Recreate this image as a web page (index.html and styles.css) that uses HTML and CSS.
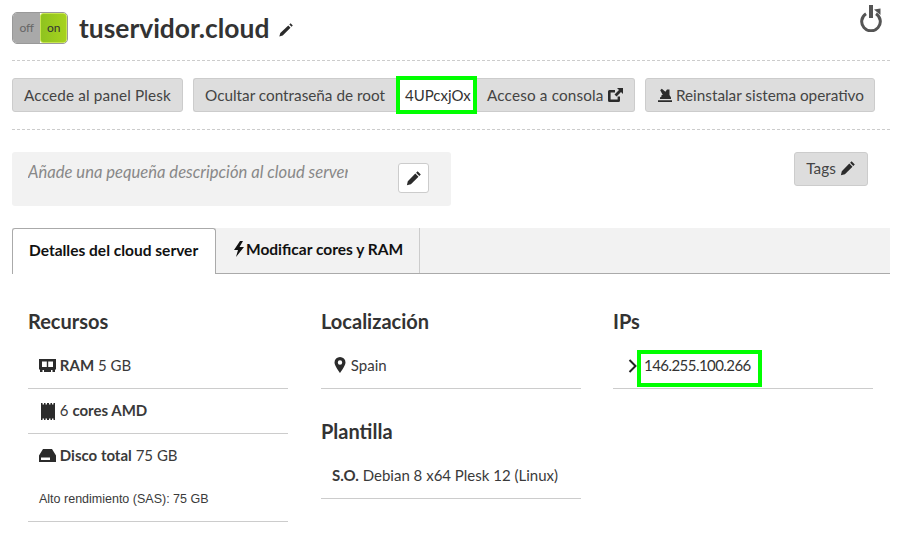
FILE: index.html
```html
<!DOCTYPE html>
<html lang="en">
<head>
    <meta charset="utf-8">
    <title>tuservidor.cloud</title>
    <link rel="stylesheet" href="styles.css">
</head>
<body>
    <div class="page">
        <header class="top">
            <div class="switch">
                <span class="switch-off">off</span>
                <span class="switch-on">on</span>
            </div>
            <h1>tuservidor.cloud</h1>
            <svg class="icon title-pencil" viewBox="0 0 16 16"><path d="M12.600 1.200l2.200 2.200-1.300 1.300-2.200-2.200zM10.300 3.500l2.200 2.200-7.800 7.800-3.400 1 1-3.400z"/></svg>
            <svg class="power" viewBox="0 0 24 27"><path d="M7 8.700a9.300 9.300 0 1 0 10 0" fill="none" stroke="#555" stroke-width="3"/><path d="M10 0h4v13h-4z" fill="#555"/><path d="M15 4.500l6.500-1v6.500z" fill="#555"/></svg>
        </header>

        <div class="actions">
            <button class="btn btn-spaced btn-panel">Accede al panel Plesk</button>
            <div class="btn-group">
                <button class="btn btn-left">Ocultar contraseña de root</button>
                <span class="mark mark-pass">4UPcxjOx</span>
                <button class="btn btn-right btn-spaced">Acceso a consola
                    <svg class="icon icon-external" viewBox="0 0 16 16"><path d="M2.500 3H8v2.400H3.600v7h7V9.600H13v3.900a1.500 1.500 0 0 1-1.500 1.500h-9A1.500 1.500 0 0 1 1 13.500v-9A1.500 1.500 0 0 1 2.500 3zM10 1h6v6l-2-2-4.500 4.500-2-2L12 3z"/></svg>
                </button>
            </div>
            <button class="btn btn-reinstall">
                <svg class="icon icon-reinstall" viewBox="0 0 16 16"><path d="M1 15v-1.800h14V15zM3 12v-1.500l1.500-1V8h1.300L3.200 3.300l1.600-1.500 3.600 2.900L10 2.500h2.500v5.500l1.500 2.500v1.500z"/></svg>
                Reinstalar sistema operativo</button>
        </div>

        <div class="desc-row">
            <div class="desc">
                <span class="desc-text">Añade una pequeña descripción al cloud server</span>
                <button class="edit-btn">
                    <svg class="icon" viewBox="0 0 16 16"><path d="M11.600 1.200l3.200 3.200-1.500 1.500-3.200-3.200zM9.300 3.500l3.200 3.200-7.600 7.600-4 .9.9-4z"/></svg>
                </button>
            </div>
            <button class="btn btn-tags">Tags
                <svg class="icon" viewBox="0 0 16 16"><path d="M11.600 1.200l3.200 3.200-1.500 1.500-3.200-3.200zM9.300 3.500l3.200 3.200-7.600 7.600-4 .9.9-4z"/></svg>
            </button>
        </div>

        <nav class="tabs">
            <a class="tab active">Detalles del cloud server</a>
            <a class="tab">
                <svg class="bolt" viewBox="0 0 10 16"><path d="M6 0L0 9h4l-2 7 8-10H5.500L9 0z"/></svg>Modificar cores y RAM</a>
        </nav>

        <div class="cols">
            <section class="col">
                <h2>Recursos</h2>
                <div class="row">
                    <svg class="icon icon-res" viewBox="0 0 17 13"><path d="M0 0h17v10.500h-1V13h-2.500v-2H12v2H5v-2H3.500v2H1v-2.500H0zM3 2.500v5.500h4.800V2.500zM9.200 2.500v5.500H14V2.500z" fill-rule="evenodd"/></svg>
                    <b>RAM</b> 5 GB
                </div>
                <div class="row">
                    <svg class="icon icon-cpu" viewBox="0 0 16 17"><path d="M1 0h1.500v1.500H4V0h1.500v1.500H7V0h2v1.500h1.500V0H12v1.500h1.500V0H15v17h-1.500v-1.500H12V17h-1.500v-1.500H9V17H7v-1.500H5.500V17H4v-1.500H2.500V17H1z"/></svg>
                    6 <b>cores AMD</b>
                </div>
                <div class="row row-disk">
                    <div>
                        <svg class="icon icon-res" viewBox="0 0 17 13"><path d="M4 0h9l4 6.500V13H0V6.500zM2 8.500v2.500h9V8.500z" fill-rule="evenodd"/></svg>
                        <b>Disco total</b> 75 GB
                    </div>
                    <small>Alto rendimiento (SAS): 75 GB</small>
                </div>
            </section>
            <section class="col">
                <h2>Localización</h2>
                <div class="row row-spain">
                    <svg class="icon pin" viewBox="0 0 12 16"><path d="M6 0a5.500 5.500 0 0 1 5.500 5.500C11.500 9 6 16 6 16S.5 9 .5 5.500A5.500 5.500 0 0 1 6 0zm0 3.300a2.200 2.200 0 1 0 0 4.400 2.200 2.200 0 0 0 0-4.400z" fill-rule="evenodd"/></svg>
                    Spain
                </div>
                <h2 class="second">Plantilla</h2>
                <div class="row"><b>S.O.</b> Debian 8 x64 Plesk 12 (Linux)</div>
            </section>
            <section class="col col-ips">
                <h2>IPs</h2>
                <div class="row row-ip">
                    <svg class="chevron" viewBox="0 0 10 14"><path d="M1.500 1l6 6-6 6" fill="none" stroke="#222" stroke-width="2"/></svg>
                    <span class="mark mark-ip">146.255.100.266</span>
                </div>
            </section>
        </div>
    </div>
</body>
</html>
```

FILE: styles.css
```css
* {
box-sizing: border-box;
}

body {
margin: 0;
font-family: Lato, "Open Sans", sans-serif;
font-size: 15px;
color: #3a3a3a;
background-color: #fff;
}

.page {
width: 878px;
margin-left: 12px;
}

.icon {
width: 16px;
height: 16px;
fill: #2b2b2b;
vertical-align: -2px;
}

/* cabecera */
.top {
display: flex;
align-items: center;
height: 61px;
padding-bottom: 5px;
position: relative;
border-bottom: 1px dashed #ccc;
}

.switch {
display: flex;
width: 56px;
height: 32px;
border: 1px solid #999;
border-radius: 5px;
overflow: hidden;
font-size: 12px;
line-height: 30px;
text-align: center;
}

.switch-off {
width: 28px;
color: #666;
background-color: #a9a9a9;
}

.switch-on {
width: 27px;
color: #333;
background: linear-gradient(to right, #8fc31f, #a6d21e);
border: 1px solid #c8e650;
border-radius: 3px;
line-height: 28px;
}

h1 {
margin: 0 0 0 11px;
font-size: 26.4px;
font-weight: 700;
color: #333;
}

.title-pencil {
margin-left: 9px;
margin-top: 4px;
}

.power {
position: absolute;
right: 7px;
top: 5px;
width: 24px;
height: 27px;
}

/* botones */
.actions {
display: flex;
align-items: center;
gap: 10px;
height: 69px;
border-bottom: 1px dashed #ccc;
}

.btn {
height: 34px;
padding: 0 11px;
font-family: inherit;
font-size: 15.3px;
color: #444;
background-color: #ddd;
border: 1px solid #ccc;
border-radius: 3px;
white-space: nowrap;
}

.btn-spaced {
letter-spacing: .15px;
}

.btn-panel {
width: 171px;
padding: 0;
}

.btn-group {
display: flex;
align-items: center;
}

.btn-left {
width: 205px;
border-radius: 3px 0 0 3px;
border-right: none;
padding-right: 0;
text-align: left;
}

.btn-right {
width: 158px;
border-radius: 0 3px 3px 0;
border-left: none;
padding: 0 0 0 10px;
text-align: left;
}

.icon-external {
margin-left: -1px;
}

.btn-reinstall {
width: 230px;
padding-right: 0;
text-align: left;
}

.icon-reinstall {
margin-right: -1px;
}

.mark {
display: inline-block;
border: 4px solid #00ff00;
background-color: #fff;
color: #333;
}

.mark-pass {
width: 81px;
height: 38px;
margin-left: -2px;
padding-left: 5px;
line-height: 30px;
}

/* descripcion */
.desc-row {
display: flex;
justify-content: space-between;
align-items: flex-start;
margin-top: 22px;
padding-right: 22px;
}

.desc {
display: flex;
width: 439px;
height: 54px;
padding: 10px 22px 0 16px;
justify-content: space-between;
background-color: #f2f2f2;
border-radius: 3px;
}

.desc-text {
width: 320px;
overflow: hidden;
white-space: nowrap;
font-size: 16.6px;
font-style: italic;
color: #888;
}

.edit-btn {
width: 31px;
height: 30px;
margin-top: 1px;
background-color: #fff;
border: 1px solid #ccc;
border-radius: 3px;
}

.btn-tags {
width: 74px;
padding-bottom: 3px;
}

/* pestañas */
.tabs {
display: flex;
height: 46px;
margin-top: 22px;
font-size: 15.5px;
background-color: #f2f2f2;
border-bottom: 1px solid #aaa;
}

.tab {
height: 45px;
padding: 0 16px;
font-weight: 700;
line-height: 42px;
color: #111;
border-right: 1px solid #ccc;
}

.tab.active {
width: 204px;
height: 46px;
background-color: #fff;
border: 1px solid #aaa;
border-bottom: none;
border-radius: 3px 3px 0 0;
}

.tab:not(.active) {
width: 204px;
padding: 0 0 0 18px;
}

.bolt {
width: 10px;
height: 16px;
fill: #111;
vertical-align: -2px;
margin-right: 2px;
}

/* columnas */
.cols {
display: flex;
gap: 33px;
padding: 36px 0 0 16px;
}

.col {
width: 260px;
}

.col-ips {
margin-left: -1px;
}

h2 {
margin: 0;
font-size: 20px;
font-weight: 700;
line-height: 22px;
color: #333;
}

h2.second {
margin-top: 31px;
}

.row {
height: 45px;
padding: 10px 11px 0;
line-height: 22px;
border-bottom: 1px solid #ccc;
}

h2 + .row {
margin-top: 12px;
height: 45px;
}

.icon-res {
width: 17px;
height: 13px;
vertical-align: -1px;
}

.icon-cpu {
height: 17px;
vertical-align: -4px;
margin: 0 0 0 1px;
}

.row-disk {
height: 88px;
}

.row-disk small {
display: block;
margin-top: 22px;
font-family: "Liberation Sans", sans-serif;
font-size: 12.5px;
}

.row-spain {
padding-left: 13px;
}

.pin {
width: 12px;
height: 16px;
margin-right: 1px;
}

.row-ip {
display: flex;
align-items: center;
padding: 0 0 0 15px;
position: relative;
}

.chevron {
width: 10px;
height: 14px;
}

.mark-ip {
position: absolute;
left: 24px;
top: 6px;
width: 125px;
height: 37px;
padding-left: 3px;
line-height: 22px;
letter-spacing: -.55px;
white-space: nowrap;
}
```
